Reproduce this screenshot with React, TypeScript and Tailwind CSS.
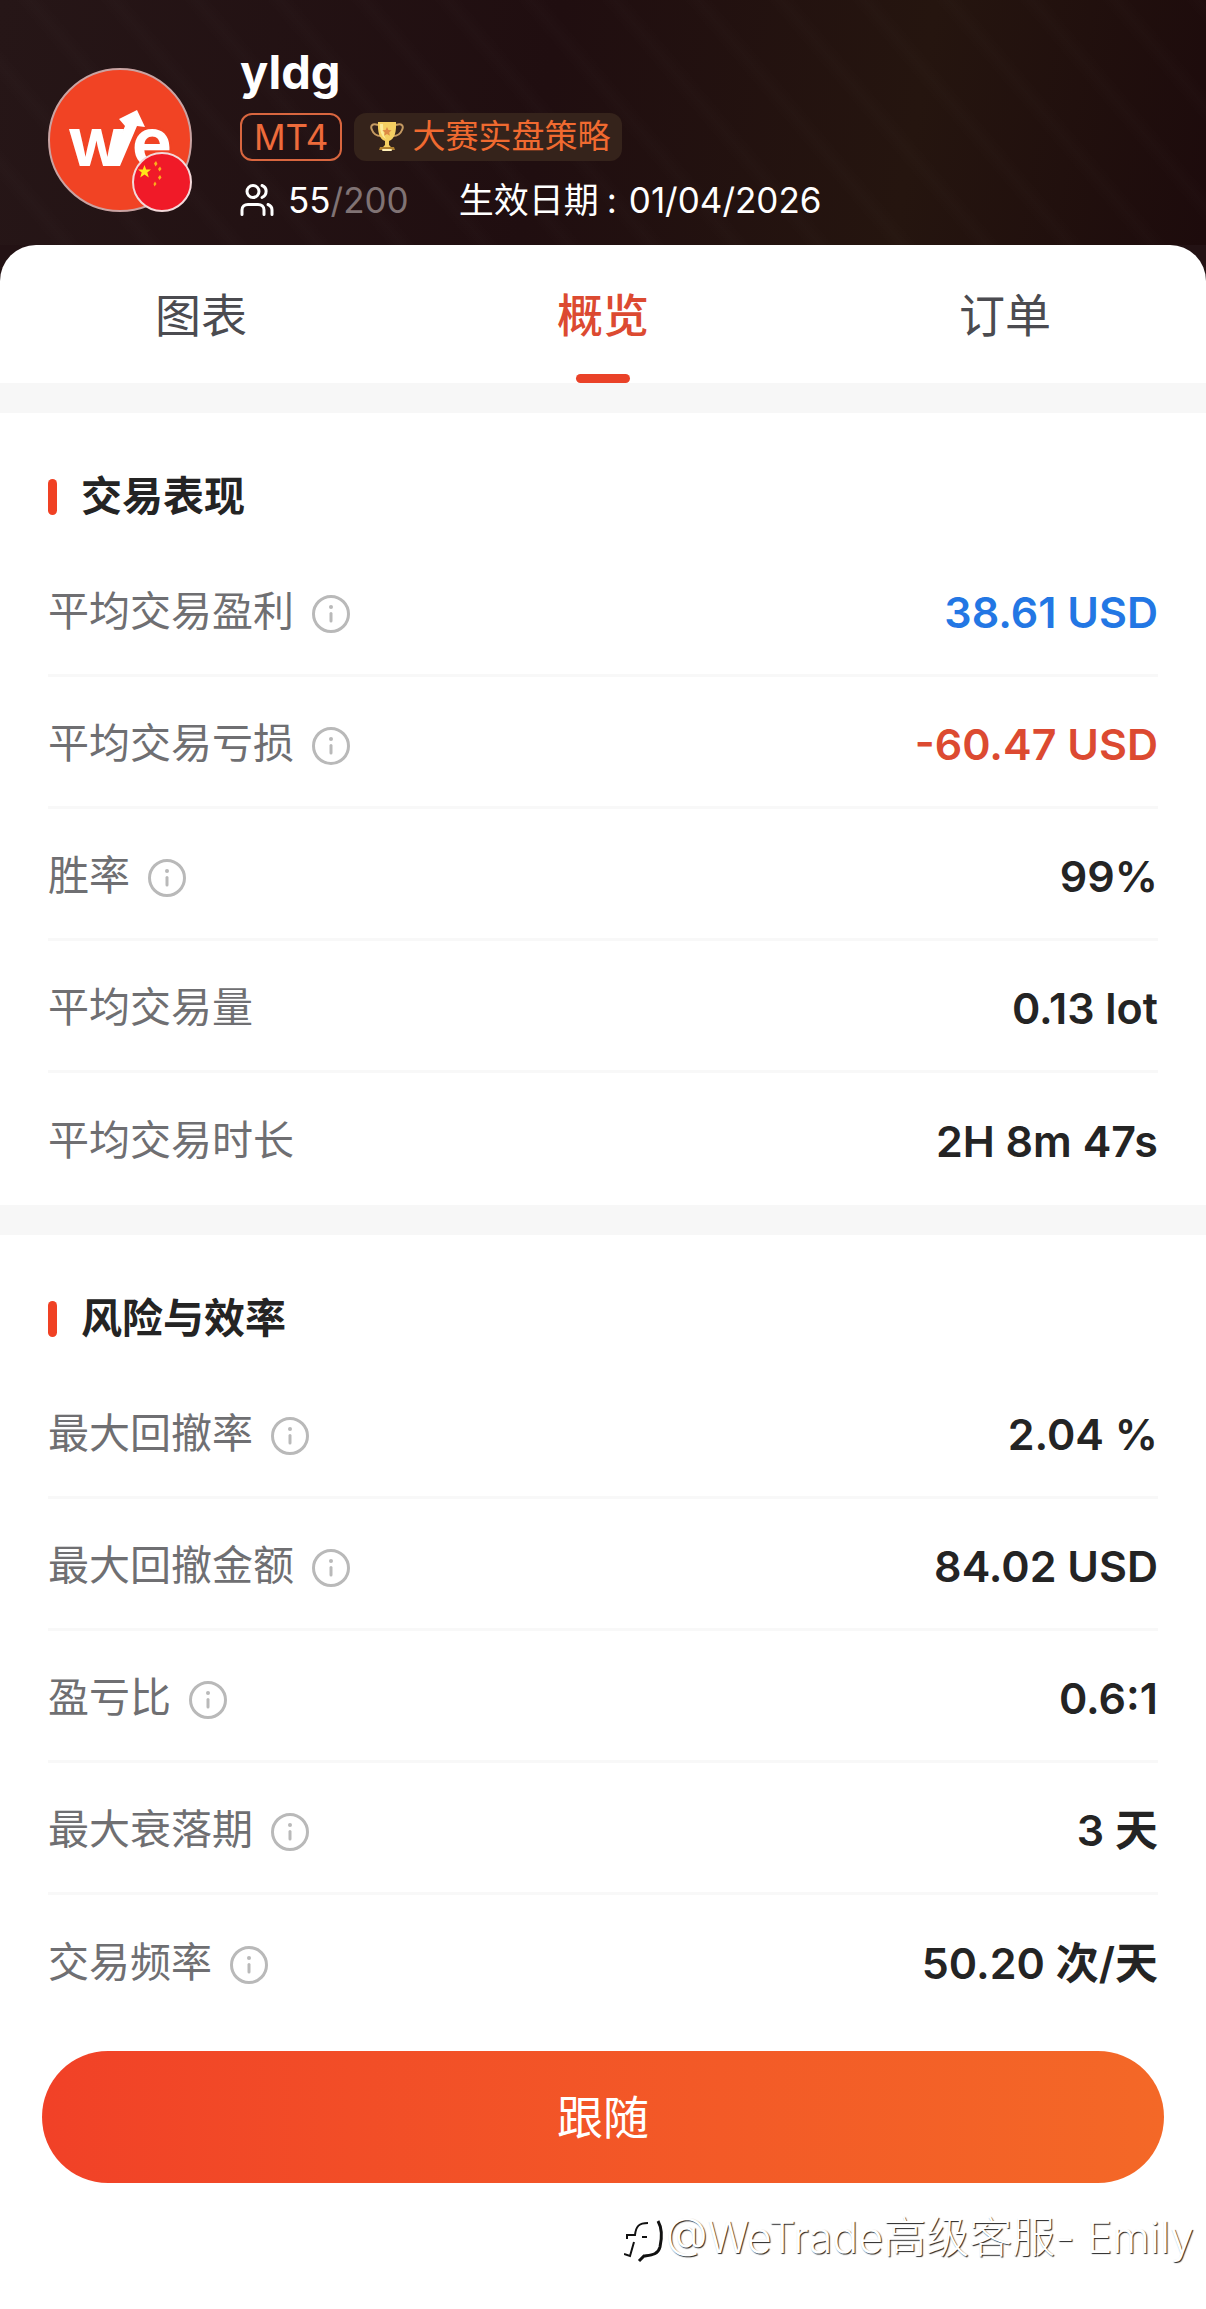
import clsx from "clsx";

type Stat = {
  label: string;
  value: string;
  info?: boolean;
  tone?: "profit" | "loss";
};

const tabs = ["图表", "概览", "订单"];

const performance: Stat[] = [
  { label: "平均交易盈利", value: "38.61 USD", info: true, tone: "profit" },
  { label: "平均交易亏损", value: "-60.47 USD", info: true, tone: "loss" },
  { label: "胜率", value: "99%", info: true },
  { label: "平均交易量", value: "0.13 lot" },
  { label: "平均交易时长", value: "2H 8m 47s" },
];

const risk: Stat[] = [
  { label: "最大回撤率", value: "2.04 %", info: true },
  { label: "最大回撤金额", value: "84.02 USD", info: true },
  { label: "盈亏比", value: "0.6:1", info: true },
  { label: "最大衰落期", value: "3 天", info: true },
  { label: "交易频率", value: "50.20 次/天", info: true },
];

function Logo() {
  return (
    <svg viewBox="0 0 144 144" className="size-full" role="img" aria-label="WeTrade">
      <circle cx="72" cy="72" r="71" fill="#f14324" stroke="#c9a3a2" strokeWidth="2" />
      <g fill="#fff" fontFamily="Inter, sans-serif" fontWeight="700" fontSize="67">
        <text x="20" y="98">w</text>
        <text x="84" y="98" stroke="#f14324" strokeWidth="5" paintOrder="stroke">e</text>
        <path d="M60 98 L77 58 L71 51 L89 42 L97 59 L89 58 L72 98 Z" />
      </g>
    </svg>
  );
}

function Flag() {
  return (
    <svg viewBox="0 0 60 60" className="size-full" role="img" aria-label="中国">
      <circle cx="30" cy="30" r="29" fill="#f01a28" stroke="#f3d9da" strokeWidth="2" />
      <path
        d="M12.500 13 L14.200 17.500 L19 17.500 L15.300 20.600 L16.800 25.500 L12.500 22.500 L8.200 25.500 L9.700 20.600 L6 17.500 L10.800 17.500 Z"
        fill="#ffe619"
      />
      <g fill="#fbae1c">
        <path d="M24 9 l1.500 3 -2 2.500 -1.500 -3z" />
        <path d="M28 14.500 l1.500 2.500 -2 2.500 -1.500 -2.500z" />
        <path d="M28 23 l1.500 2.500 -2 2.500 -1.500 -2.500z" />
        <path d="M23 29.500 l1.500 2.500 -2 2.500 -1 -2.500z" />
      </g>
    </svg>
  );
}

function Trophy() {
  return (
    <svg viewBox="0 0 34 32" className="h-8 w-[34px]" aria-hidden="true">
      <path
        d="M8 4 C2 2 0 5 2 9 C3.500 13 7 15 11 15 M26 4 C32 2 34 5 32 9 C30.500 13 27 15 23 15"
        fill="none"
        stroke="#c59a62"
        strokeWidth="2"
      />
      <path d="M8 1 H26 C26.500 10 25 18 19 20 V24 L22 27 H12 L15 24 V20 C9 18 7.500 10 8 1 Z" fill="#f5cf62" />
      <path d="M10 3 H13 C13 10 14 15 16 18 C11 15 10 10 10 3 Z" fill="#fdeb9a" />
      <path d="M17 6 l1.400 3 3.200 .3 -2.400 2.200 .7 3.300 -2.900 -1.700 -2.900 1.700 .7 -3.300 -2.400 -2.200 3.200 -.3z" fill="#dd8a45" />
      <path d="M10 26 H24 L25 29 H9 Z" fill="#b08130" />
      <rect x="12" y="28" width="10" height="2" rx="1" fill="#fff0b8" />
    </svg>
  );
}

function Followers() {
  return (
    <svg
      viewBox="0 0 34 34"
      className="size-[34px]"
      fill="none"
      stroke="currentColor"
      strokeWidth="3"
      strokeLinecap="round"
      aria-hidden="true"
    >
      <circle cx="13" cy="8.500" r="6" />
      <path d="M22 2.500 C27.500 4.500 27.500 12 22 14.500" />
      <path d="M2 31.500 V27 C2 23.500 4.500 21.500 8 21.500 H18 C21.500 21.500 24 23.500 24 27 V31.500" />
      <path d="M28 21.500 C30.500 22.500 32 24.500 32 27 V31.500" />
    </svg>
  );
}

function InfoButton({ label }: { label: string }) {
  return (
    <button type="button" aria-label={`${label}说明`} className="mt-1 size-[38px] text-[#b9b9b9]">
      <svg viewBox="0 0 38 38" className="size-full" fill="none" stroke="currentColor">
        <circle cx="19" cy="19" r="17.500" strokeWidth="3" />
        <path d="M19 18.500 V26" strokeWidth="3" strokeLinecap="round" />
        <circle cx="19" cy="12" r="2" fill="currentColor" stroke="none" />
      </svg>
    </button>
  );
}

function StatSection({ title, stats }: { title: string; stats: Stat[] }) {
  return (
    <section className="border-t-[30px] border-[#f7f7f7] px-12">
      <h2 className="flex h-[132px] items-center gap-6 pt-9 text-[41px] font-bold text-[#242424]">
        <span className="h-9 w-[9px] rounded-full bg-[#f04124]" />
        {title}
      </h2>
      <dl>
        {stats.map((stat) => (
          <div
            key={stat.label}
            className="flex h-[132px] items-center justify-between border-b-3 border-[#f8f8f8] pt-1 last:border-b-0"
          >
            <dt className="flex items-center gap-[18px] text-[41px] text-[#6f6f72]">
              {stat.label}
              {stat.info && <InfoButton label={stat.label} />}
            </dt>
            <dd
              className={clsx(
                "text-[43px] leading-[60px] font-semibold",
                stat.tone === "profit" && "text-[#2377e4]",
                stat.tone === "loss" && "text-[#dc4a31]",
                !stat.tone && "text-[#242424]",
              )}
            >
              {stat.value}
            </dd>
          </div>
        ))}
      </dl>
    </section>
  );
}

function Watermark() {
  return (
    <p className="flex items-center justify-end pr-3 text-[43px] leading-[60px] font-light whitespace-nowrap text-white [text-shadow:1px_1px_1px_#222]">
      <svg viewBox="0 0 42 46" className="mt-2 h-[46px] w-[42px]" fill="none" stroke="#111" aria-hidden="true">
        <path d="M24 5 C15 5 12 8 11 17 H3 V21" strokeWidth="2" />
        <path d="M10 24 L6 38 L0 36" strokeWidth="2" />
        <path d="M18 19 H23" strokeWidth="2" />
        <path d="M34 3 C38 10 38 20 36 29 C34 37 27 37 20 38 L15 43" strokeWidth="3" />
      </svg>
      @WeTrade高级客服- Emily
    </p>
  );
}

export default function App() {
  return (
    <div className="flex min-h-screen flex-col bg-[#231214] font-['Inter','Noto_Sans_CJK_SC',sans-serif]">
      <header className="flex gap-12 bg-[repeating-linear-gradient(50deg,#ffffff00_0_40px,#ffffff03_52px,#ffffff00_64px),linear-gradient(100deg,#261617,#200e10_45%,#25150f_75%,#1d0b0c)] px-12 pt-11 pb-[21px] text-white">
        <div className="relative mt-6 size-36 shrink-0">
          <Logo />
          <div className="absolute right-0 bottom-0 size-[60px]">
            <Flag />
          </div>
        </div>
        <div>
          <h1 className="text-[47px] leading-[56px] font-bold">yldg</h1>
          <div className="mt-[13px] flex gap-3">
            <span className="flex h-12 items-center rounded-xl border-2 border-[#d9663f] px-3 text-[35px] text-[#ee6b3b]">
              MT4
            </span>
            <span className="flex h-12 items-center gap-2 rounded-xl bg-[#35231b] pr-3 pl-4 text-[33px] text-[#f06a30]">
              <Trophy />
              大赛实盘策略
            </span>
          </div>
          <div className="mt-[15px] flex h-12 items-center text-[35px]">
            <Followers />
            <span className="ml-[14px]">55</span>
            <span className="text-[#807374]">/200</span>
            <span className="ml-[50px]">生效日期</span>
            <span className="mr-3 ml-2">:</span>
            <span>01/04/2026</span>
          </div>
        </div>
      </header>

      <main className="flex-1 rounded-t-[36px] bg-white">
        <nav className="grid h-[138px] grid-cols-3">
          {tabs.map((tab) => {
            const active = tab === "概览";
            return (
              <button
                key={tab}
                type="button"
                aria-current={active ? "page" : undefined}
                className={clsx(
                  "flex flex-col items-center justify-between pt-9 text-[46px] leading-[68px]",
                  active ? "font-medium text-[#dc4a31]" : "text-[#4b4b50]",
                )}
              >
                {tab}
                {active && <span className="h-[9px] w-[54px] rounded-full bg-[#ea4228]" />}
              </button>
            );
          })}
        </nav>

        <StatSection title="交易表现" stats={performance} />
        <StatSection title="风险与效率" stats={risk} />

        <div className="px-[42px] pt-6">
          <button
            type="button"
            className="h-[132px] w-full rounded-full bg-linear-to-r from-[#f14127] to-[#f46827] text-[46px] text-white"
          >
            跟随
          </button>
        </div>
        <div className="pt-6 pb-10">
          <Watermark />
        </div>
      </main>
    </div>
  );
}
